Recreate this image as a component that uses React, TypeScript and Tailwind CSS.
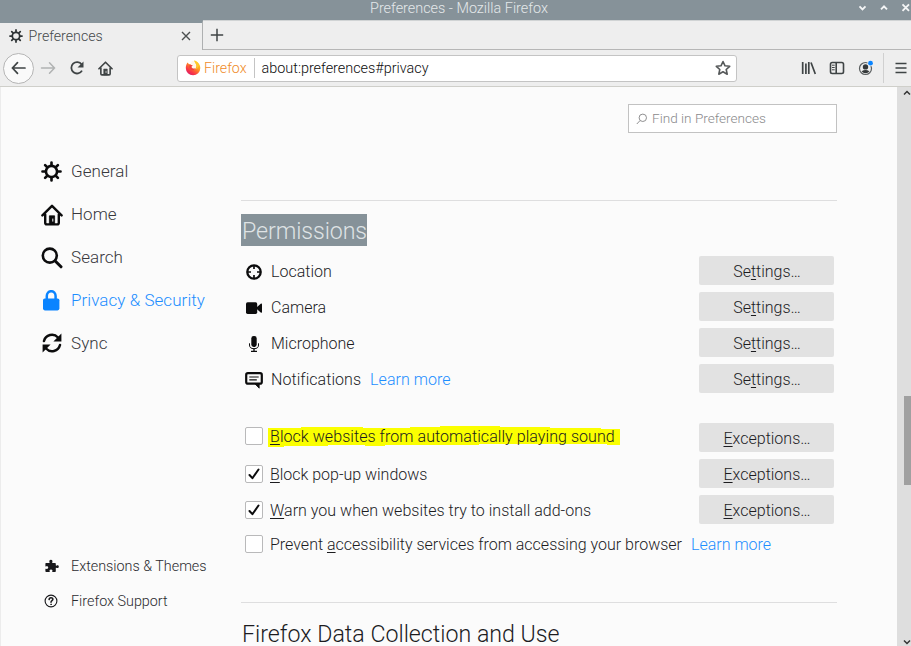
import React from 'react';

type IconProps = { className?: string };

const Gear = ({ className }: IconProps) => (
  <svg viewBox="0 0 20 20" className={className} fill="none" stroke="currentColor" strokeLinecap="round">
    <circle cx="10" cy="10" r="5.3" strokeWidth="2.5" />
    <path
      strokeWidth="2.5"
      d="M10 1.4v2.6M10 16v2.6M1.4 10h2.6M16 10h2.6M3.9 3.9l1.8 1.8M14.3 14.3l1.8 1.8M16.1 3.9l-1.8 1.8M5.7 14.3l-1.8 1.8"
    />
  </svg>
);

const House = ({ className }: IconProps) => (
  <svg viewBox="0 0 22 22" className={className} fill="none" stroke="currentColor" strokeWidth="2.4" strokeLinecap="round" strokeLinejoin="round">
    <path d="M1.4 11.4L11 1.8l9.6 9.6" />
    <path d="M4.2 10.5v8.3q0 1.6 1.6 1.6h10.4q1.6 0 1.6-1.6v-8.3" />
    <path d="M8.4 20v-8.2h5.2V20z" fill="currentColor" strokeWidth="0.8" />
    <path d="M11.8 15v2.2" stroke="#fafafa" strokeWidth="1" />
  </svg>
);

const Magnifier = ({ className }: IconProps) => (
  <svg viewBox="0 0 22 22" className={className} fill="none" stroke="currentColor" strokeLinecap="round">
    <circle cx="8.8" cy="8.6" r="7" strokeWidth="2.6" />
    <path d="M14.2 14l5.8 5.8" strokeWidth="3" />
  </svg>
);

const Padlock = ({ className }: IconProps) => (
  <svg viewBox="0 0 22 22" className={className}>
    <path d="M5.800 10V6a4.200 4.600 0 0 1 8.800 0V10" fill="none" stroke="currentColor" strokeWidth="2.5" />
    <rect x="2" y="8.4" width="16.4" height="12" rx="1.8" fill="currentColor" />
  </svg>
);

const SyncArrows = ({ className }: IconProps) => (
  <svg viewBox="0 0 20 20" className={className} fill="none" stroke="currentColor" strokeWidth="2.5" strokeLinecap="round">
    <path d="M2 8A8.2 8.2 0 0 1 16 4.5M18 12A8.2 8.2 0 0 1 4 15.5" />
    <path d="M19.4 .6v8h-8zM.6 19.4v-8h8z" fill="currentColor" stroke="none" />
  </svg>
);

const Puzzle = ({ className }: IconProps) => (
  <svg viewBox="0 0 14 14" className={className} fill="currentColor">
    <path d="M1 4h3.2c.5 0 .6-.5.3-.9C4 2.200 4.500.700 5.900.700s1.900 1.500 1.400 2.400c-.3.4-.2.900.3.900H10q.8 0 .8.800v1.400c0 .5.4.6.900.300.900-.5 2.100-.1 2.100 1.200s-1.200 1.700-2.100 1.200c-.5-.3-.9-.1-.9.300v3q0 .8-.8.800H7.700c-.5 0-.6-.4-.4-.8.400-.8 0-1.700-1.300-1.700s-1.700.9-1.300 1.700c.2.400.1.800-.4.800H1.200q-.8 0-.8-.8v-2c0-.5.500-.600.900-.400.800.400 1.900.1 1.900-1.200S2.100 6.900 1.300 7.300C.900 7.500.400 7.400.400 6.900V4.600Q.400 4 1 4z" />
  </svg>
);

const Help = ({ className }: IconProps) => (
  <svg viewBox="0 0 14 14" className={className} fill="none" stroke="currentColor" strokeLinecap="round">
    <circle cx="7" cy="7" r="5.9" strokeWidth="1.1" />
    <path d="M5.100 5.600C5.200 3 8.900 3.100 8.900 5.300 8.900 6.700 7 6.700 7 8.200" strokeWidth="1.5" />
    <circle cx="7" cy="10.300" r=".4" strokeWidth=".8" />
  </svg>
);

const Target = () => (
  <svg viewBox="0 0 18 18" className="size-[18px]" fill="none" stroke="currentColor" strokeWidth="2.300">
    <circle cx="9" cy="9" r="6.700" />
    <path d="M9 2v4M9 12v4M2 9h4M12 9h4" strokeWidth="1.700" />
  </svg>
);

const Camera = () => (
  <svg viewBox="0 0 18 18" className="size-[18px]" fill="currentColor">
    <rect x="1" y="3.300" width="11.200" height="11.600" rx="1.600" />
    <path d="M11.500 8.400L15.700 4.700q1.300-.6 1.300.6v7.600q0 1.200-1.300.6L11.500 9.800z" />
  </svg>
);

const Mic = () => (
  <svg viewBox="0 0 18 18" className="size-[18px]" fill="currentColor">
    <rect x="6.300" y="1" width="5.400" height="11" rx="2.400" />
    <path d="M4.500 8.300v1.700a4.500 3.700 0 0 0 9 0V8.300" fill="none" stroke="currentColor" strokeWidth="1" />
    <path d="M9 13.500v2.500M6 16.400h6" fill="none" stroke="currentColor" strokeWidth="1.300" />
  </svg>
);

const Bubble = () => (
  <svg viewBox="0 0 18 18" className="size-[18px]" fill="none" stroke="currentColor">
    <path d="M2.900 2.200h12.200q1.700 0 1.700 1.700v7q0 1.700-1.700 1.700H2.900q-1.700 0-1.700-1.700v-7q0-1.700 1.700-1.700z" strokeWidth="2.200" />
    <path d="M9.500 12.500h4.700v4.700z" fill="currentColor" strokeWidth=".8" strokeLinejoin="round" />
    <path d="M4.300 6h9.400M4.300 8.800h7.500" strokeWidth="1.200" />
  </svg>
);

const FirefoxLogo = () => (
  <svg viewBox="0 0 16 16" className="mr-[3px] size-4">
    <defs>
      <linearGradient id="flame" x1="0.9" y1="0" x2="0.2" y2="1">
        <stop offset="0" stopColor="#ffe226" />
        <stop offset=".4" stopColor="#ff9a20" />
        <stop offset=".75" stopColor="#fa3746" />
        <stop offset="1" stopColor="#d5186c" />
      </linearGradient>
    </defs>
    <path d="M2.600 2.500L4 4.200l2-.3C7 2.200 8 1.800 8.700 1.700L9.500.500c3.500 1.200 5.800 4.100 5.800 7.600a7.200 7.200 0 0 1-14.500 0C.800 5.500 1.700 3.700 2.600 2.500z" fill="url(#flame)" />
    <path d="M5.500 3.900L7 .8h2.200C10.800 3.200 11.700 5 11.300 6.800 11 8.700 9.700 9.500 8.300 9.300 6.500 9 5.600 7.500 6 5.800z" fill="#fff6ea" />
    <path d="M4.500 4.800l3.300.4-1.300 1.600c.2 1.700 2 2.200 3.800 1.500-.7 2-2.900 2.600-4.600 1.500-1.400-1-1.700-3.200-1.200-5z" fill="#f0443c" />
    <path d="M9.500.500c-.4 2 1.600 2.900 2.100 4.500.5 1.500.1 2.900-1 4 2.400-.5 3.600-2.800 3-5.100C12.300 2 11 .9 9.500.500z" fill="#ffca28" />
  </svg>
);

const navItems = [
  { label: 'General', icon: <Gear className="size-[21px]" /> },
  { label: 'Home', icon: <House className="size-[22px]" /> },
  { label: 'Search', icon: <Magnifier className="size-[22px]" /> },
  { label: 'Privacy & Security', icon: <Padlock className="size-[22px]" />, active: true },
  { label: 'Sync', icon: <SyncArrows className="mb-px ml-px size-5" /> },
];

const permissions = [
  { label: 'Location', icon: <Target /> },
  { label: 'Camera', icon: <Camera /> },
  { label: 'Microphone', icon: <Mic /> },
  { label: 'Notifications', icon: <Bubble />, link: true },
];

const Key = ({ children }: { children: React.ReactNode }) => (
  <span className="underline decoration-1 underline-offset-2">{children}</span>
);

const Button = ({ before = '', accessKey, after }: { before?: string; accessKey: string; after: string }) => (
  <button className="h-[29px] w-[135px] shrink-0 rounded-[2px] bg-[#e2e2e2] pl-px text-center text-[16px] font-light leading-[31px] text-[#1c1c1f]">
    {before}
    <Key>{accessKey}</Key>
    {after}
  </button>
);

const Checkbox = ({ checked = false }: { checked?: boolean }) => (
  <span className="flex size-[18px] shrink-0 items-center justify-center rounded-[2px] border border-[#b9b9ba] bg-white">
    {checked && (
      <svg viewBox="0 0 16 16" className="size-4" fill="none" stroke="#0c0c0d" strokeWidth="2" strokeLinecap="round" strokeLinejoin="round">
        <path d="M3.500 9l2.900 3.200 6.100-8.700" />
      </svg>
    )}
  </span>
);

const LearnMore = ({ className }: IconProps) => <a className={`text-[#1d8eff] ${className}`}>Learn more</a>;

function TitleBar() {
  return (
    <header className="flex h-5 shrink-0 items-start bg-[#869299] text-white">
      <div className="flex-1 pl-[7px] text-center text-[14.400px] font-light leading-[17px] text-[#e4e8ea]">Preferences - Mozilla Firefox</div>
      <svg viewBox="0 0 54 16" className="-ml-[54px] h-4 w-[54px]" fill="none" stroke="#f4f5f6" strokeWidth="1.900">
        <path d="M2.500 6.300l3 3 3-3M24 9.300l3-3 3 3M45.500 4.300l6.500 6.500M52 4.300l-6.500 6.500" />
      </svg>
    </header>
  );
}

function TabBar() {
  return (
    <div className="flex h-[30px] shrink-0 bg-[#eee]">
      <div className="flex w-[203px] items-center border-r border-t-[3px] border-r-[#aeb0b1] border-t-[#87949b] pl-[9px] pr-[10px] text-[#2e3436]">
        <Gear className="mb-px size-[14px]" />
        <span className="ml-[5.500px] flex-1 pb-px text-[14.200px] font-light leading-5 text-[#45494b]">Preferences</span>
        <svg viewBox="0 0 12 12" className="mb-px size-3" fill="none" stroke="#4b4f50" strokeWidth="1.400">
          <path d="M2 2l8 8M10 2l-8 8" />
        </svg>
      </div>
      <div className="flex flex-1 items-center border-b border-t border-b-[#b6b6b6] border-t-[#d0d3d4] pl-[7px]">
        <svg viewBox="0 0 14 14" className="size-[14px]" stroke="#3f4445" strokeWidth="1.500">
          <path d="M7 .8v12.400M.8 7h12.400" />
        </svg>
      </div>
    </div>
  );
}

function NavBar() {
  return (
    <div className="flex h-[37px] shrink-0 items-center border-b border-[#cfcfca] bg-[#eee] pl-[3px] text-[#3f4445]">
      <div className="flex size-[31px] items-center justify-center rounded-full border border-[#b5b5b5] bg-[#fafafa]">
        <svg viewBox="0 0 16 16" className="size-4" fill="none" stroke="currentColor" strokeWidth="1.700" strokeLinecap="round">
          <path d="M14 8h-12.500M6.500 2.700L1.500 8l5 5.300" />
        </svg>
      </div>
      <svg viewBox="0 0 16 16" className="ml-[6px] size-4" fill="none" stroke="#b0b2b2" strokeWidth="1.500" strokeLinecap="round">
        <path d="M1.500 8h13M9.500 2.700l5 5.300-5 5.300" />
      </svg>
      <svg viewBox="0 0 16 16" className="ml-[13px] size-4" fill="none" stroke="currentColor" strokeWidth="1.800">
        <path d="M12.700 4.500A5.700 5.700 0 1 0 13 10.600" />
        <path d="M14.500 1.500v6H8.500z" fill="currentColor" stroke="none" />
      </svg>
      <House className="ml-[13px] size-[15px]" />
      <div className="ml-16 flex h-[27px] w-[560px] items-center rounded-[3px] border border-[#c4c4c4] bg-white pl-[7px] pr-[5px]">
        <FirefoxLogo />
        <span className="pt-[2px] text-[14.200px] font-light text-[#f08c28]">Firefox</span>
        <span className="ml-[7px] mr-[7px] h-5 w-px bg-[#c4c4c4]" />
        <span className="flex-1 pt-px text-[14.400px] font-light text-[#0c0c0d]">about:preferences#privacy</span>
        <svg viewBox="0 0 16 16" className="size-4" fill="none" stroke="#555859" strokeWidth="1.600" strokeLinejoin="round">
          <path d="M8 1.500l2 4.300 4.700.5-3.500 3.200 1 4.700L8 11.800l-4.200 2.400 1-4.700L1.300 6.300l4.700-.5z" />
        </svg>
      </div>
      <svg viewBox="0 0 15 14" className="ml-[64px] h-[14px] w-[15px]" fill="none" stroke="currentColor" strokeWidth="1.700">
        <path d="M1.700 1v12M4.900 2.500V13M7.800 1v12M10 1.500L14.300 13" />
      </svg>
      <svg viewBox="0 0 16 14" className="ml-[13px] h-[14px] w-4" fill="none" stroke="currentColor" strokeWidth="1.600">
        <rect x="1.500" y="1.500" width="13" height="11" rx="1.700" />
        <path d="M7.200 2v10" />
        <path d="M3 4.200h2.700M3 6.500h2.700M3 8.800h2.700" strokeWidth="1" />
      </svg>
      <svg viewBox="0 0 16 16" className="ml-[13px] size-4">
        <circle cx="7.500" cy="8.500" r="6" fill="none" stroke="#5a5e5f" strokeWidth="1.200" />
        <circle cx="7.500" cy="6.900" r="2.700" fill="#35393a" />
        <path d="M3.600 11.300q3.900-2.600 7.800 0-1.400 2-3.900 2t-3.900-2z" fill="#35393a" />
        <circle cx="12.500" cy="3.200" r="3.100" fill="#eee" />
        <circle cx="12.500" cy="3.200" r="2.400" fill="#0a84ff" />
      </svg>
      <span className="ml-[9px] mr-[11px] h-[30px] w-px bg-[#d0d0d0]" />
      <svg viewBox="0 0 12 12" className="size-3" stroke="currentColor" strokeWidth="1.600">
        <path d="M.5 1.500h11M.5 6h11M.5 10.500h11" />
      </svg>
    </div>
  );
}

function Sidebar() {
  return (
    <nav className="flex w-[240px] shrink-0 flex-col pl-10 pt-[63px]">
      {navItems.map((item) => (
        <div
          key={item.label}
          className={`flex h-[43px] items-center text-[17px] font-light tracking-[0.06px] ${item.active ? 'text-[#1d8eff]' : 'text-[#38383d]'}`}
        >
          <span className={`flex w-[30px] items-center ${item.active ? 'text-[#0a84ff]' : 'text-[#0c0c0d]'}`}>{item.icon}</span>
          {item.label}
        </div>
      ))}
      <div className="mt-[184px] flex h-[35px] items-center text-[14.350px] font-light text-[#2a2a2e]">
        <span className="flex w-[30px] pb-px pl-1 text-[#18181b]"><Puzzle className="size-[14px]" /></span>
        Extensions &amp; Themes
      </div>
      <div className="flex h-[35px] items-center text-[14.350px] font-light text-[#2a2a2e]">
        <span className="flex w-[30px] pb-px pl-[3px] text-[#18181b]"><Help className="size-[14px]" /></span>
        Firefox Support
      </div>
    </nav>
  );
}

function Content() {
  return (
    <main className="flex w-[596px] shrink-0 flex-col pt-[17px] [&>*]:shrink-0">
      <div className="flex h-[29px] w-[209px] items-center self-end border border-[#c2c2c2] bg-white pl-[7px]">
        <svg viewBox="0 0 12 12" className="size-3" fill="none" stroke="#8f8f90" strokeWidth="1">
          <circle cx="6.800" cy="4.800" r="3.700" />
          <path d="M4 7.600L.800 11" />
        </svg>
        <span className="ml-1 pb-px text-[13.600px] font-light text-[#8a8a8c]">Find in Preferences</span>
      </div>
      <hr className="mt-[67px] border-[#dededf]" />
      <h2 className="mt-[13px] h-8 self-start bg-[#869299] pl-px text-[23.200px] font-light leading-[34px] tracking-[-0.08px] text-[#dfe3e5]">Permissions</h2>
      <div className="mt-[10px] flex flex-col gap-[7px] pr-[3px]">
        {permissions.map((row) => (
          <div key={row.label} className="flex h-[29px] items-center">
            <span className="flex w-[30px] items-center pl-1 pt-[3px] text-[#0c0c0d]">{row.icon}</span>
            <span className={`flex-1 pt-[2px] text-[16px] font-light leading-[29px] text-[#1c1c1f] ${row.link ? 'tracking-[0.05px]' : ''}`}>
              {row.label}
              {row.link && <LearnMore className="ml-[9px]" />}
            </span>
            <Button before="Se" accessKey="t" after="tings…" />
          </div>
        ))}
      </div>
      <div className="mt-[30px] flex flex-col gap-[7px] pr-[3px] text-[16px] font-light text-[#1c1c1f]">
        <div className="flex h-[29px] items-center pl-1">
          <div className="flex flex-1 items-center pb-[4px]">
            <Checkbox />
            <span className="relative ml-[7px] pt-[2px] tracking-[0.06px]">
              <svg viewBox="0 0 352 22" className="absolute -left-[2px] top-[3px] h-[22px] w-[352px]">
                <path d="M0 2h33V1h62v1h47V1h30V0h60v1h50v1h51v1h19v16h-13v-1H211v1h-94v1h-20v-1H60v1H16v1H0z" fill="#fbff00" />
              </svg>
              <span className="relative"><Key>B</Key>lock websites from automatically playing sound</span>
            </span>
          </div>
          <Button accessKey="E" after="xceptions…" />
        </div>
        <div className="flex h-[29px] items-center pl-1">
          <Checkbox checked />
          <span className="ml-[7px] flex-1 pt-[2px] tracking-[-0.02px]"><Key>B</Key>lock pop-up windows</span>
          <Button accessKey="E" after="xceptions…" />
        </div>
        <div className="flex h-[29px] items-center pl-1">
          <Checkbox checked />
          <span className="ml-[7px] flex-1 pt-[2px] tracking-[0.02px]"><Key>W</Key>arn you when websites try to install add-ons</span>
          <Button accessKey="E" after="xceptions…" />
        </div>
      </div>
      <div className="mt-[5px] flex h-[29px] items-center pl-1 text-[16px] font-light text-[#1c1c1f]">
        <Checkbox />
        <span className="ml-[7px] pt-[2px]">Prevent <Key>a</Key>ccessibility services from accessing your browser</span>
        <LearnMore className="ml-[9px] pt-[2px]" />
      </div>
      <hr className="mt-[44px] border-[#dededf]" />
      <h2 className="mt-[19px] h-6 pl-px text-[23.200px] font-light leading-[24px] text-[#1c1c1f]">Firefox Data Collection and Use</h2>
    </main>
  );
}

function Scrollbar() {
  return (
    <div className="ml-auto flex w-[14px] flex-col items-end bg-[#dedede]">
      <svg viewBox="0 0 8 6" className="mt-[3px] h-[6px] w-2" fill="none" stroke="#333" strokeWidth="1.500">
        <path d="M1 4.500l3-3 3 3" />
      </svg>
      <div className="mt-[300px] h-[89px] w-[7px] bg-[#a0a0a0]" />
      <svg viewBox="0 0 8 6" className="mb-[1px] mt-auto h-[6px] w-2" fill="none" stroke="#333" strokeWidth="1.500">
        <path d="M1 1.500l3 3 3-3" />
      </svg>
    </div>
  );
}

export default function App() {
  return (
    <div className="flex h-[646px] w-[911px] flex-col overflow-hidden bg-[#fbfbfb] font-['Roboto',sans-serif]">
      <TitleBar />
      <TabBar />
      <NavBar />
      <div className="flex min-h-0 flex-1 overflow-hidden border-l border-[#ececec]">
        <Sidebar />
        <Content />
        <Scrollbar />
      </div>
    </div>
  );
}
